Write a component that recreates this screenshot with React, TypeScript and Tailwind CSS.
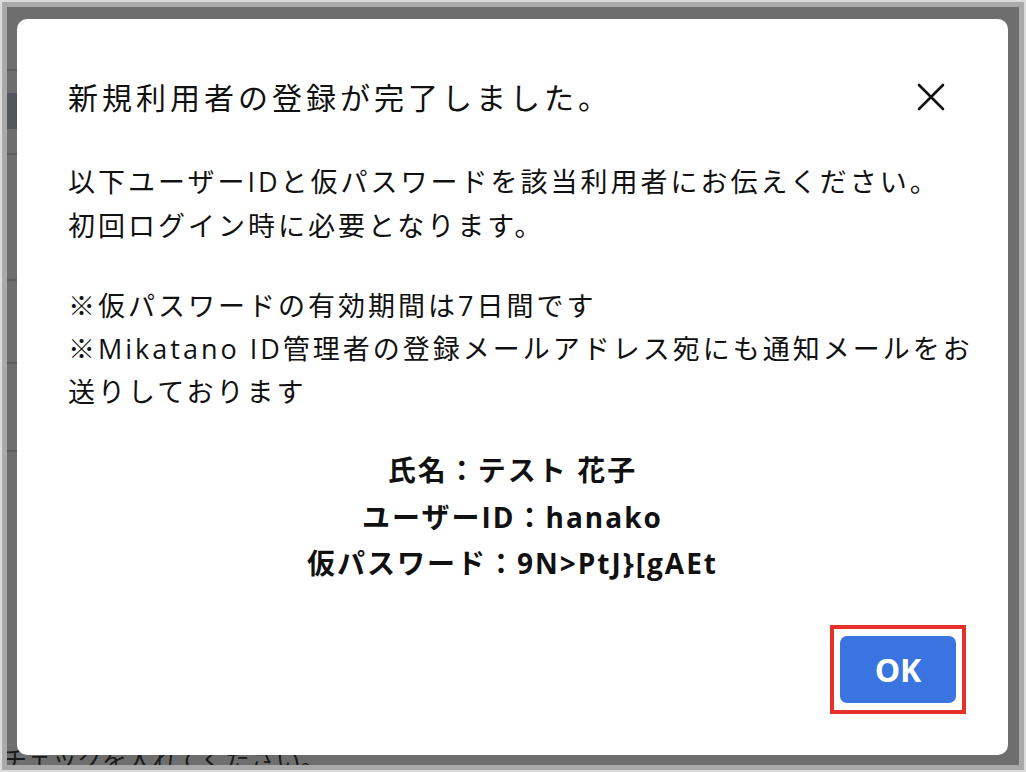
import React from "react";

const jp = { fontFamily: '"Open Sans", "Noto Sans CJK JP", sans-serif' };

export default function App() {
  return (
    <div className="w-[1026px] h-[772px] bg-[#dcdcdc] p-[2px]" style={jp}>
      <div className="h-full bg-[#a9a9a9] p-[5px]">
        <div className="relative h-full overflow-hidden bg-[#6e6e6e] flex pt-[12px] pb-[10px] pr-[11px]">
          <div className="w-[10px] shrink-0 flex flex-col -mt-[12px]">
            <div className="h-[62px]" />
            <div className="h-[2px] bg-[#5e5e5e]" />
            <div className="h-[22px]" />
            <div className="h-[36px] bg-[#53575d]" />
            <div className="h-[24px]" />
            <div className="h-[2px] bg-[#5e5e5e]" />
            <div className="h-[124px]" />
            <div className="h-[2px] bg-[#5e5e5e]" />
            <div className="h-[81px]" />
            <div className="h-[2px] bg-[#5e5e5e]" />
            <div className="h-[86px]" />
            <div className="h-[2px] bg-[#5e5e5e]" />
          </div>
          <div className="absolute left-[-5px] bottom-[-9px] text-[25px] leading-[30px] text-[#1a1a1a] whitespace-nowrap">
            チェックを入れてください。
          </div>
          <div className="relative z-10 flex-1 bg-white rounded-[10px] flex flex-col pl-[51px] pr-[33px] pt-[59px] text-[#111]">
            <div className="flex items-center">
              <h1 className="text-[30px] leading-[40px] tracking-[4px] font-normal">新規利用者の登録が完了しました。</h1>
              <svg width="30" height="30" viewBox="0 0 30 30" className="ml-auto mr-[29px] -mt-[2px]">
                <path d="M3 3 L27 27 M27 3 L3 27" stroke="#111" strokeWidth="2.6" strokeLinecap="round" />
              </svg>
            </div>
            <div className="mt-[42px] text-[27px] leading-[44px] tracking-[3px]">
              <p>以下ユーザーIDと仮パスワードを該当利用者にお伝えください。</p>
              <p>初回ログイン時に必要となります。</p>
            </div>
            <div className="mt-[36px] text-[27px] leading-[43px] tracking-[3px]">
              <p>※仮パスワードの有効期間は7日間です</p>
              <p>※Mikatano ID管理者の登録メールアドレス宛にも通知メールをお送りしております</p>
            </div>
            <div className="mt-[34px] pr-[18px] text-center font-bold text-[28px] leading-[46.5px] tracking-[2px]">
              <p>氏名：テスト 花子</p>
              <p>ユーザーID：hanako</p>
              <p>{"仮パスワード：9N>PtJ}[gAEt"}</p>
            </div>
            <div className="flex justify-end mt-auto mb-[41px] mr-[9px]">
              <div className="border-[4px] border-[#e5312a] px-[6px] py-[7px]">
                <button className="w-[116px] h-[67px] rounded-[7px] bg-[#3a74e0] text-white font-bold text-[32px] leading-none">
                  OK
                </button>
              </div>
            </div>
          </div>
        </div>
      </div>
    </div>
  );
}
